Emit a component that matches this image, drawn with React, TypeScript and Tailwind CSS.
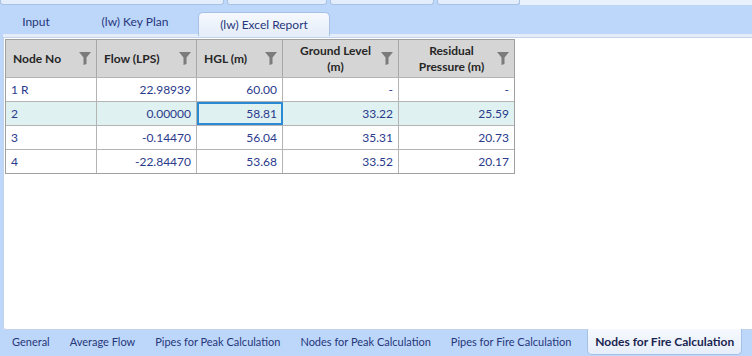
import React from 'react';

const Funnel = () => (
  <svg width="12" height="13" viewBox="0 0 12 13" className="shrink-0">
    <path d="M0 0 H12 L7.5 5.5 V12 L4.5 13 V5.5 Z" fill="#7b7b7b" />
  </svg>
);

const cols = [
  { label: ['Node No'], w: 'w-[91px]' },
  { label: ['Flow (LPS)'], w: 'w-[100px]' },
  { label: ['HGL (m)'], w: 'w-[86px]' },
  { label: ['Ground Level', '(m)'], w: 'w-[116px]' },
  { label: ['Residual', 'Pressure (m)'], w: 'w-[115px]' },
];

const rows = [
  ['1 R', '22.98939', '60.00', '-', '-'],
  ['2', '0.00000', '58.81', '33.22', '25.59'],
  ['3', '-0.14470', '56.04', '35.31', '20.73'],
  ['4', '-22.84470', '53.68', '33.52', '20.17'],
];

const bottomTabs = [
  'General',
  'Average Flow',
  'Pipes for Peak Calculation',
  'Nodes for Peak Calculation',
  'Pipes for Fire Calculation',
];

function App() {
  return (
    <div className="w-[752px] h-[356px] overflow-hidden bg-[#bcd7fa] flex flex-col font-['Lato',sans-serif] text-[12px] whitespace-nowrap">
      {/* Cut-off tabs at the very top */}
      <div className="h-[5px] flex shrink-0">
        <div className="w-[224px] bg-[#e3edfb] border border-t-0 border-[#a9c3e6] rounded-b-[3px]" />
        <div className="w-[100px] ml-[3px] bg-[#e3edfb] border border-t-0 border-[#a9c3e6] rounded-b-[3px]" />
        <div className="w-[104px] ml-[3px] bg-[#e3edfb] border border-t-0 border-[#a9c3e6] rounded-b-[3px]" />
        <div className="w-[83px] ml-[3px] bg-[#e3edfb] border border-t-0 border-[#a9c3e6] rounded-b-[3px]" />
        <div className="flex-1 bg-[#e9f1fc]" />
      </div>

      {/* Top tab strip */}
      <div className="h-[29px] flex items-end shrink-0 text-[#27367a]">
        <div className="w-[72px] h-[24px] flex items-center justify-center">Input</div>
        <div className="w-[126px] h-[24px] flex items-center justify-center">(lw) Key Plan</div>
        <div className="w-[132px] h-[24px] flex items-center justify-center rounded-t-[5px] border border-b-0 border-[#a6c1e6] bg-gradient-to-b from-[#f6f9fe] to-[#e4edf9] -mb-[2px] relative z-10">
          (lw) Excel Report
        </div>
      </div>

      {/* Content panel */}
      <div className="flex-1 ml-[3px] border-t-[3px] border-[#e4edf9] bg-white flex flex-col rounded-bl-[3px]">
        <div className="flex-1 border-t border-l border-b border-[#c3d3ea] rounded-bl-[3px] bg-white pt-[1px] pl-[1px]">
          <div className="inline-flex flex-col border border-[#a0a0a0]">
            <div className="flex h-[37px] bg-[#d5d5d5]">
              {cols.map((c, i) => (
                <div
                  key={i}
                  className={`${c.w} flex items-center justify-between pl-[7px] pr-[5px] border-r border-[#a8a8a8] last:border-r-0 font-bold text-[#262626] leading-[16px]`}
                >
                  <div className={`flex-1 ${c.label.length > 1 ? 'text-center' : ''}`}>
                    {c.label.map((l, j) => (
                      <div key={j}>{l}</div>
                    ))}
                  </div>
                  <Funnel />
                </div>
              ))}
            </div>
            {rows.map((r, ri) => (
              <div
                key={ri}
                className={`flex h-[24px] border-t border-[#b4b4b4] text-[#2a3a8c] ${ri === 1 ? 'bg-[#dff1f1]' : 'bg-white'}`}
              >
                {r.map((v, ci) => (
                  <div
                    key={ci}
                    className={`${cols[ci].w} flex items-center px-[5px] border-r border-[#b4b4b4] last:border-r-0 ${ci === 0 ? 'justify-start' : 'justify-end'} ${ri === 1 && ci === 2 ? 'outline outline-2 -outline-offset-2 outline-[#2a8ad4] bg-[#dff1f1]' : ''}`}
                  >
                    {v}
                  </div>
                ))}
              </div>
            ))}
          </div>
        </div>
      </div>

      {/* Bottom tab strip */}
      <div className="h-[26px] flex items-start shrink-0 text-[#27367a] text-[11px] pl-[2px]">
        {bottomTabs.map((t) => (
          <div key={t} className="h-[24px] px-[10px] flex items-center">
            {t}
          </div>
        ))}
        <div className="h-[26px] -mt-[1px] ml-[6px] px-[7px] flex items-center text-[12px] font-bold text-[#1b2450] rounded-b-[5px] border border-t-0 border-[#a6c1e6] bg-gradient-to-b from-[#f6f9fe] to-[#e6eefa]">
          Nodes for Fire Calculation
        </div>
      </div>
    </div>
  );
}

export default App;
